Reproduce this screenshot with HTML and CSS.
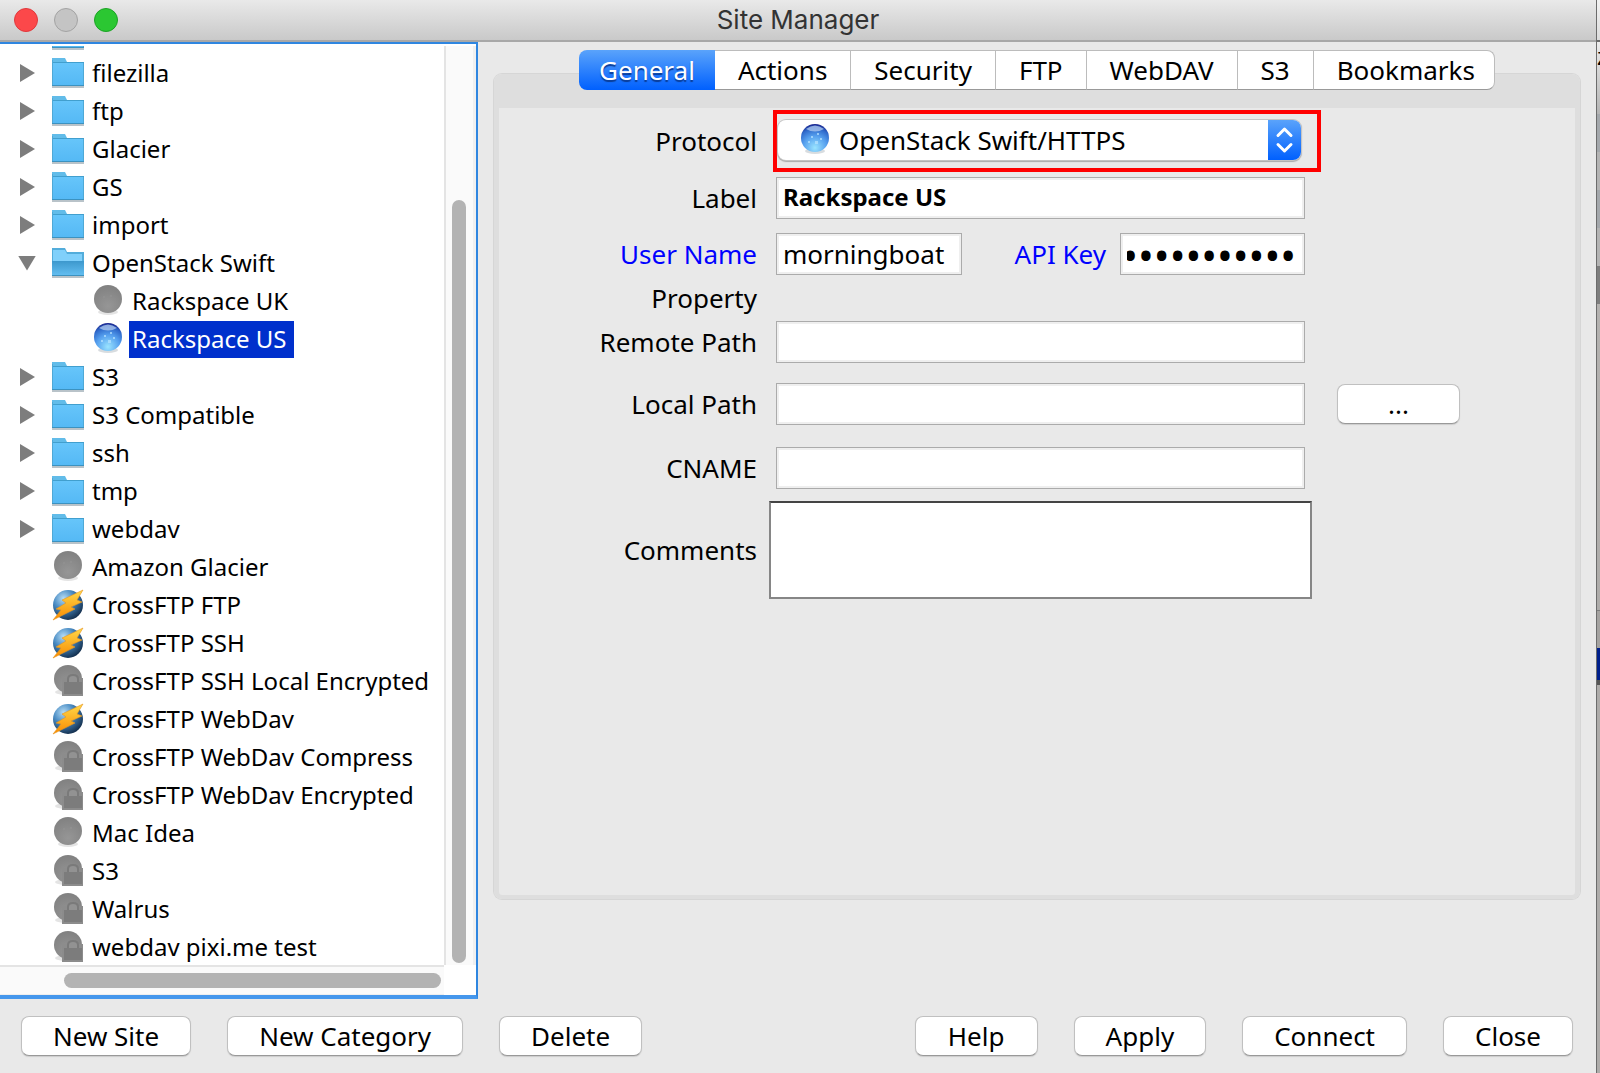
FILE: index.html
```
<!DOCTYPE html>
<html lang="en">
<head>
  <meta charset="utf-8">
  <title>Site Manager</title>
  <link rel="stylesheet" href="styles.css">
</head>
<body>
  <!-- icons used by the tree and the protocol list -->
  <svg class="defs" aria-hidden="true">
    <defs>
      <linearGradient id="g-folder" x1="0" y1="0" x2="0" y2="1">
        <stop offset="0" stop-color="#66c5fa"/><stop offset="1" stop-color="#55b9f5"/>
      </linearGradient>
      <linearGradient id="g-open" x1="0" y1="0" x2="0" y2="1">
        <stop offset="0" stop-color="#3d98cd"/><stop offset="1" stop-color="#62bdf0"/>
      </linearGradient>
      <radialGradient id="g-grey" cx="0.5" cy="0.75" r="0.7">
        <stop offset="0" stop-color="#969696"/><stop offset="1" stop-color="#828282"/>
      </radialGradient>
      <radialGradient id="g-blue" cx="0.5" cy="0.85" r="0.85">
        <stop offset="0" stop-color="#9ae4ff"/><stop offset="0.5" stop-color="#559fee"/>
        <stop offset="0.8" stop-color="#2f6acb"/><stop offset="1" stop-color="#17208a"/>
      </radialGradient>
      <radialGradient id="g-globe" cx="0.35" cy="0.28" r="0.75">
        <stop offset="0" stop-color="#b5dcf5"/><stop offset="0.45" stop-color="#4a8cc4"/>
        <stop offset="1" stop-color="#14304f"/>
      </radialGradient>
      <linearGradient id="g-bolt" x1="0" y1="0" x2="0" y2="1">
        <stop offset="0" stop-color="#ffd94a"/><stop offset="1" stop-color="#f88a00"/>
      </linearGradient>
      <symbol id="i-folder" viewBox="0 0 32 30">
        <path d="M0 29h32" stroke="#b9c3c9" stroke-width="2"/>
        <path d="M0 0h13l2 4h17v24H0z" fill="#62bce9"/>
        <path d="M1 5h30v22H1z" fill="url(#g-folder)"/>
        <path d="M0 4.500h14M14 4.500h18" stroke="#419fce"/>
        <path d="M.5 2v26M31.500 5v23" stroke="#4fa9d6"/>
        <path d="M0 27.500h32" stroke="#3c92c0"/>
      </symbol>
      <symbol id="i-open" viewBox="0 0 32 30">
        <path d="M0 29h32" stroke="#b9c3c9" stroke-width="2"/>
        <path d="M0 0h13l2 4h17v24H0z" fill="#53addb"/>
        <path d="M1 2h12l2 4h15v7H1z" fill="#80d0fb"/>
        <path d="M0 13h32v14H0z" fill="url(#g-open)"/>
        <path d="M0 27.500h32" stroke="#3c92c0"/>
      </symbol>
      <symbol id="i-grey" viewBox="0 0 32 32">
        <ellipse cx="16" cy="27" rx="10" ry="3" fill="#e4e4e4"/>
        <circle cx="16" cy="14" r="14" fill="url(#g-grey)"/>
        <circle cx="12" cy="12" r="1" fill="#929292"/><circle cx="19" cy="11" r="1" fill="#929292"/>
      </symbol>
      <symbol id="i-blue" viewBox="0 0 32 32">
        <ellipse cx="16" cy="27" rx="10" ry="3" fill="#d8dcdf"/>
        <circle cx="16" cy="14" r="14" fill="url(#g-blue)"/>
        <path d="M7 5Q16-2 25 5Q16 10 7 5z" fill="#a9c4ec" opacity=".8"/>
        <path d="M12 12h2v2h-2zM18 9h2v2h-2zM16 17h3v3h-3zM9 17h2v2H9zM21 14h2v2h-2z" fill="#b8e4ff" opacity=".7"/>
      </symbol>
      <symbol id="i-lock" viewBox="0 0 32 32">
        <ellipse cx="14" cy="27" rx="11" ry="3" fill="#e4e4e4"/>
        <circle cx="16" cy="14" r="14" fill="url(#g-grey)"/>
        <path d="M10 13h21v18H10z" fill="#8c8c8c"/>
        <path d="M16 18v-4q0-4 5-4t5 4v4" fill="#929292" stroke="#7a7a7a" stroke-width="2"/>
        <path d="M12 17h18v12H12z" fill="#7c7c7c"/>
      </symbol>
      <symbol id="i-bolt" viewBox="0 0 32 32">
        <circle cx="16" cy="16" r="15" fill="url(#g-globe)"/>
        <path d="M31 1L10 11l4 3-10 6 5 1-8 10 22-11-4-2 11-5-5-2z" fill="url(#g-bolt)" stroke="#e8951c" stroke-width=".6"/>
      </symbol>
    </defs>
  </svg>

  <div class="window">
    <header class="titlebar">
      <div class="lights">
        <button class="light red" aria-label="Close window"></button>
        <button class="light grey" aria-label="Minimize window"></button>
        <button class="light green" aria-label="Zoom window"></button>
      </div>
      <h1>Site Manager</h1>
    </header>

    <main class="content">
      <div class="sites">
        <ul class="tree">
          <li class="cut"><span class="arrow"></span><svg class="folder"><use href="#i-folder"/></svg></li>
          <li><span class="arrow"></span><svg class="folder"><use href="#i-folder"/></svg><span class="name">filezilla</span></li>
          <li><span class="arrow"></span><svg class="folder"><use href="#i-folder"/></svg><span class="name">ftp</span></li>
          <li><span class="arrow"></span><svg class="folder"><use href="#i-folder"/></svg><span class="name">Glacier</span></li>
          <li><span class="arrow"></span><svg class="folder"><use href="#i-folder"/></svg><span class="name">GS</span></li>
          <li><span class="arrow"></span><svg class="folder"><use href="#i-folder"/></svg><span class="name">import</span></li>
          <li><span class="arrow open"></span><svg class="folder"><use href="#i-open"/></svg><span class="name">OpenStack Swift</span></li>
          <li class="child"><svg class="site"><use href="#i-grey"/></svg><span class="name">Rackspace UK</span></li>
          <li class="child"><svg class="site"><use href="#i-blue"/></svg><span class="name selected">Rackspace US</span></li>
          <li><span class="arrow"></span><svg class="folder"><use href="#i-folder"/></svg><span class="name">S3</span></li>
          <li><span class="arrow"></span><svg class="folder"><use href="#i-folder"/></svg><span class="name">S3 Compatible</span></li>
          <li><span class="arrow"></span><svg class="folder"><use href="#i-folder"/></svg><span class="name">ssh</span></li>
          <li><span class="arrow"></span><svg class="folder"><use href="#i-folder"/></svg><span class="name">tmp</span></li>
          <li><span class="arrow"></span><svg class="folder"><use href="#i-folder"/></svg><span class="name">webdav</span></li>
          <li class="leaf"><svg class="site"><use href="#i-grey"/></svg><span class="name">Amazon Glacier</span></li>
          <li class="leaf"><svg class="bolt"><use href="#i-bolt"/></svg><span class="name">CrossFTP FTP</span></li>
          <li class="leaf"><svg class="bolt"><use href="#i-bolt"/></svg><span class="name">CrossFTP SSH</span></li>
          <li class="leaf"><svg class="site"><use href="#i-lock"/></svg><span class="name">CrossFTP SSH Local Encrypted</span></li>
          <li class="leaf"><svg class="bolt"><use href="#i-bolt"/></svg><span class="name">CrossFTP WebDav</span></li>
          <li class="leaf"><svg class="site"><use href="#i-lock"/></svg><span class="name">CrossFTP WebDav Compress</span></li>
          <li class="leaf"><svg class="site"><use href="#i-lock"/></svg><span class="name">CrossFTP WebDav Encrypted</span></li>
          <li class="leaf"><svg class="site"><use href="#i-grey"/></svg><span class="name">Mac Idea</span></li>
          <li class="leaf"><svg class="site"><use href="#i-lock"/></svg><span class="name">S3</span></li>
          <li class="leaf"><svg class="site"><use href="#i-lock"/></svg><span class="name">Walrus</span></li>
          <li class="leaf"><svg class="site"><use href="#i-lock"/></svg><span class="name">webdav pixi.me test</span></li>
        </ul>
        <div class="vbar"><div class="vthumb"></div></div>
        <div class="hbar"><div class="hthumb"></div></div>
      </div>

      <section class="details">
        <div class="tabs" role="tablist">
          <button class="tab active" role="tab" aria-selected="true">General</button>
          <button class="tab" role="tab">Actions</button>
          <button class="tab" role="tab">Security</button>
          <button class="tab" role="tab">FTP</button>
          <button class="tab" role="tab">WebDAV</button>
          <button class="tab" role="tab">S3</button>
          <button class="tab" role="tab">Bookmarks</button>
        </div>
        <form class="panel">
          <div class="row protocol-row">
            <label for="protocol">Protocol</label>
            <div class="highlight">
              <div class="combo">
                <svg class="site"><use href="#i-blue"/></svg>
                <select id="protocol">
                  <option>OpenStack Swift/HTTPS</option>
                </select>
                <span class="stepper"><svg viewBox="0 0 33 40"><path d="M10 15.500l6.500-6.500 6.500 6.500M10 24.500l6.500 6.500 6.500-6.500" fill="none" stroke="#fff" stroke-width="3" stroke-linecap="round" stroke-linejoin="round"/></svg></span>
              </div>
            </div>
          </div>
          <div class="row label-row">
            <label for="label">Label</label>
            <input class="bold" type="text" id="label" value="Rackspace US">
          </div>
          <div class="row user-row">
            <label class="required" for="user">User Name</label>
            <div class="pair">
              <input type="text" id="user" value="morningboat">
              <label class="required" for="key">API Key</label>
              <input class="key" type="password" id="key" value="morningboat">
            </div>
          </div>
          <div class="row property-row">
            <span class="caption">Property</span>
          </div>
          <div class="row">
            <label for="remote">Remote Path</label>
            <input type="text" id="remote">
          </div>
          <div class="row path-row">
            <label for="local">Local Path</label>
            <input type="text" id="local">
            <button class="btn" type="button">...</button>
          </div>
          <div class="row path-row">
            <label for="cname">CNAME</label>
            <input type="text" id="cname">
          </div>
          <div class="row comments-row">
            <label for="comments">Comments</label>
            <textarea id="comments"></textarea>
          </div>
        </form>
      </section>
    </main>

    <footer class="actions">
      <button class="btn">New Site</button>
      <button class="btn">New Category</button>
      <button class="btn">Delete</button>
      <button class="btn push">Help</button>
      <button class="btn">Apply</button>
      <button class="btn">Connect</button>
      <button class="btn">Close</button>
    </footer>
  </div>
  <div class="behind">z</div>
</body>
</html>
```
FILE: styles.css
```
* {
  box-sizing: border-box;
}

html, body {
  height: 100%;
  margin: 0;
}

body {
  display: flex;
  overflow: hidden;
  background: #e9e9e9;
  color: #000;
  font: 26px/40px "Noto Sans", "Open Sans", sans-serif;
}

button, input, select, textarea {
  margin: 0;
  font: inherit;
  color: inherit;
}

.defs {
  position: absolute;
  width: 0;
  height: 0;
}

.window {
  flex: 1;
  min-width: 0;
  display: flex;
  flex-direction: column;
}

/* sliver of the window underneath */
.behind {
  width: 4px;
  padding-top: 36px;
  overflow: hidden;
  border-left: 1px solid #6c6c6c;
  background: linear-gradient(#f2f2f2, #dcdcdc 40px, #6c6c6c 40px, #6c6c6c 42px, #ececec 42px, #b4b4b4 114px, #a4a8ac 114px, #a4a8ac 152px, #b4b4b4 152px, #b4b4b4 190px, #a4a8ac 190px, #a4a8ac 228px, #b4b4b4 228px, #b4b4b4 266px, #7e7e7e 266px, #7e7e7e 304px, #b4b2b0 304px, #aeacaa 610px, #7e7e7e 610px, #7e7e7e 611px, #a5a3a1 611px, #a5a3a1 648px, #00208c 648px, #00208c 680px, #555 680px, #555 685px, #aeacaa 685px);
  font-size: 24px;
}

.titlebar {
  display: grid;
  grid-template-columns: 1fr auto 1fr;
  align-items: center;
  height: 42px;
  padding: 0 14px;
  border-bottom: 2px solid #a8a8a8;
  border-radius: 0 8px 0 0;
  background: linear-gradient(#e9e9e9, #c9c9c9);
}

.titlebar h1 {
  margin: 0;
  color: #333;
  font: 26px/40px Inter, sans-serif;
}

.lights {
  display: flex;
  gap: 16px;
}

.light {
  width: 24px;
  height: 24px;
  padding: 0;
  border: 1px solid #a3a3a3;
  border-radius: 50%;
  background: #c4c4c4;
}

.light.red {
  border-color: #e0383c;
  background: #fc484a;
}

.light.green {
  border-color: #1ba325;
  background: #2bc732;
}

.content {
  flex: 1;
  min-height: 0;
  display: flex;
}

/* site tree */
.sites {
  flex: none;
  width: 478px;
  display: grid;
  grid-template-columns: 1fr 32px;
  grid-template-rows: 1fr 30px;
  padding: 2px 0 0;
  border: solid #2f86e0;
  border-width: 2px 2px 4px 0;
  border-bottom-color: #4597ec;
  background: #fff;
}

.tree {
  min-height: 0;
  margin: 0;
  padding: 0;
  overflow: hidden;
  list-style: none;
  font-size: 24px;
  white-space: nowrap;
}

.tree li {
  display: flex;
  align-items: center;
  height: 38px;
  padding-left: 20px;
}

.tree .cut {
  height: 8px;
  align-items: flex-end;
}

.cut .arrow {
  visibility: hidden;
}

.cut .folder {
  margin-bottom: 4px;
}

.tree .leaf {
  padding-left: 52px;
}

.tree .child {
  padding-left: 92px;
}

.arrow {
  width: 15px;
  height: 18px;
  margin-right: 17px;
  background: #7d7d7d;
  clip-path: polygon(0 0, 100% 50%, 0 100%);
}

.arrow.open {
  width: 18px;
  height: 15px;
  margin: 0 16px 0 -2px;
  clip-path: polygon(0 0, 100% 0, 50% 100%);
}

.folder {
  flex: none;
  width: 32px;
  height: 30px;
}

.site, .bolt {
  flex: none;
  width: 32px;
  height: 32px;
}

.name {
  height: 37px;
  margin-left: 5px;
  padding: 0 8px 0 3px;
  line-height: 35px;
}

.selected {
  background: #0030cc;
  color: #fff;
}

.vbar {
  padding: 154px 7px 2px 6px;
  border-left: 2px solid #e4e4e4;
  border-right: 3px solid #f0f0f0;
  background: #fafafa;
}

.vthumb, .hthumb {
  height: 100%;
  border-radius: 8px;
  background: #b3b3b3;
}

.hbar {
  padding: 6px 3px 6px 64px;
  border-top: 2px solid #e4e4e4;
  border-bottom: 1px solid #eee;
  background: #fafafa;
}

/* right side */
.details {
  flex: 1;
  min-width: 0;
  display: flex;
  flex-direction: column;
  padding: 8px 16px 100px;
}

.tabs {
  display: flex;
  align-self: center;
  z-index: 1;
  margin-bottom: -16px;
}

.tab {
  height: 40px;
  padding: 0 23px;
  border: solid #bcbcbc;
  border-width: 1px 1px 1px 0;
  border-bottom-color: #999;
  background: #fff;
  line-height: 38px;
}

.tab:last-child {
  padding-right: 19px;
  border-radius: 0 8px 8px 0;
}

.tab.active {
  padding: 0 20px;
  border: 0;
  border-radius: 8px 0 0 8px;
  background: linear-gradient(#5aa3fb, #0060fe);
  color: #fff;
  text-shadow: 0 2px 1px #0a3c96;
}

.panel {
  flex: 1;
  min-height: 0;
  padding-top: 2px;
  border: solid #dedede;
  border-width: 34px 5px 4px;
  border-radius: 8px;
  box-shadow: 0 0 0 1px #d6d6d6;
}

.row {
  display: grid;
  grid-template-columns: 258px 529px auto;
  align-items: center;
  justify-content: start;
  column-gap: 19px;
  margin-bottom: 20px;
}

.row label, .caption {
  text-align: right;
}

.row .required {
  color: #0000ff;
}

.highlight {
  width: 548px;
  margin-left: -3px;
  padding: 6px 16px 8px 1px;
  border: 4px solid #ff0000;
}

.combo {
  display: flex;
  align-items: center;
  height: 40px;
  padding-left: 21px;
  border-radius: 8px;
  background: #fff;
  box-shadow: 0 0 0 1px #c4c4c4, 0 1px 1px 1px #aaa;
}

.combo select {
  flex: 1;
  height: 40px;
  margin-left: 4px;
  padding: 0 4px;
  border: 0;
  background: none;
  appearance: none;
}

.stepper {
  width: 33px;
  height: 40px;
  border-radius: 0 8px 8px 0;
  background: linear-gradient(#5aa3fb, #0060fe);
}

.stepper svg {
  display: block;
}

.row input {
  width: 100%;
  min-width: 0;
  height: 42px;
  padding: 0 6px;
  border: 1px solid #ababab;
  background: #fff;
  box-shadow: inset 0 0 0 2px #efefef;
}

.row .bold {
  padding-bottom: 4px;
  font-size: 24px;
  font-weight: bold;
}

/* keeps the end of a long key in view */
.row .key {
  padding-right: 8px;
  direction: rtl;
  font-size: 42px;
}

.pair {
  display: grid;
  grid-template-columns: 186px 1fr 185px;
  align-items: center;
  column-gap: 14px;
}

.protocol-row {
  margin-bottom: 5px;
}

.label-row {
  margin-bottom: 14px;
}

.user-row {
  margin-bottom: 3px;
}

.property-row {
  margin-bottom: 3px;
}

.path-row {
  margin-bottom: 22px;
}

.comments-row {
  margin-top: -10px;
}

.comments-row textarea {
  height: 98px;
  margin: 0 -7px;
  border: 2px solid #868686;
  border-top-color: #444;
  background: #fff;
  resize: none;
}

.btn {
  min-width: 123px;
  height: 40px;
  padding: 0 31px;
  border: 1px solid #c0c0c0;
  border-bottom-color: #999;
  border-radius: 8px;
  background: #fff;
  line-height: 36px;
  box-shadow: 0 1px 1px #ccc;
}

.path-row .btn {
  margin-left: 13px;
}

.actions {
  display: flex;
  gap: 36px;
  padding: 17px 23px 17px 21px;
}

.push {
  margin-left: auto;
}
```
